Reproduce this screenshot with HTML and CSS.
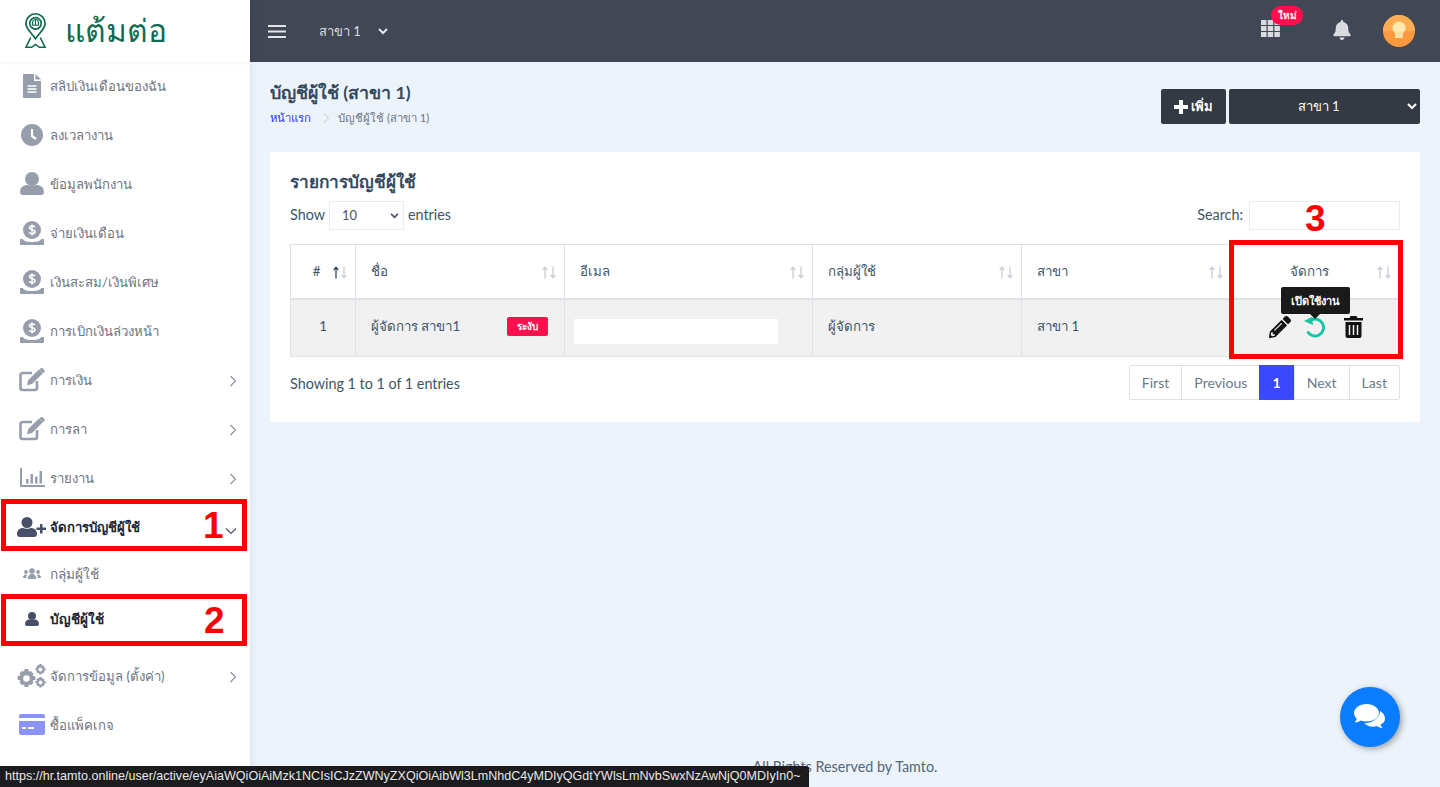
FILE: index.html
```html
<!DOCTYPE html>
<html lang="th">
<head>
  <meta charset="UTF-8">
  <title>บัญชีผู้ใช้</title>
  <link rel="stylesheet" href="styles.css">
</head>
<body>
  <div class="app">
    <aside class="sidebar">
      <div class="brand">
        <svg class="brand-icon" viewBox="0 0 24 38" fill="none" stroke="#0f6b4f" stroke-width="1.8">
          <path d="M12 27C7 20 2 17 2 11a10 10 0 0 1 20 0c0 6-5 9-10 16z"/>
          <circle cx="12" cy="11" r="6"/>
          <path d="M9 13v-3a3 3 0 0 1 6 0v3zM12 7v6" stroke-width="1.2"/>
          <path d="M7 26l-5 10h6l4-3 4 3h6l-5-10" stroke-width="1.6"/>
        </svg>
        <span class="brand-name">แต้มต่อ</span>
      </div>
      <nav class="nav">
        <a class="nav-item"><span class="nav-icon"><svg width="18" height="24" viewBox="0 0 18 24"><path fill="#989dab" d="M0 1a1 1 0 0 1 1-1h10v7h7v16a1 1 0 0 1-1 1H1a1 1 0 0 1-1-1z"/><path fill="#989dab" d="M12.500 0L18 5.500h-5.500z"/><path stroke="#fff" stroke-width="1.300" d="M4.500 12h9M4.500 15h9M4.500 18h9"/></svg></span>สลิปเงินเดือนของฉัน</a>
        <a class="nav-item"><span class="nav-icon"><svg width="22" height="22" viewBox="0 0 22 22"><circle cx="11" cy="11" r="11" fill="#989dab"/><path d="M11 5v7l4 3" fill="none" stroke="#fff" stroke-width="2.200"/></svg></span>ลงเวลางาน</a>
        <a class="nav-item"><span class="nav-icon"><svg width="24" height="23" viewBox="0 0 24 23"><circle cx="12" cy="7" r="7" fill="#989dab"/><path fill="#989dab" d="M0 20c0-5 4-7 7-7 2 1 8 1 10 0 3 0 7 2 7 7 0 2-1 3-3 3H3c-2 0-3-1-3-3z"/></svg></span>ข้อมูลพนักงาน</a>
        <a class="nav-item"><span class="nav-icon"><svg class="coin-icon" width="24" height="24" viewBox="0 0 24 24"><use href="#coin"/></svg></span>จ่ายเงินเดือน</a>
        <a class="nav-item"><span class="nav-icon"><svg class="coin-icon" width="24" height="24" viewBox="0 0 24 24"><use href="#coin"/></svg></span>เงินสะสม/เงินพิเศษ</a>
        <a class="nav-item"><span class="nav-icon"><svg class="coin-icon" width="24" height="24" viewBox="0 0 24 24"><use href="#coin"/></svg></span>การเบิกเงินล่วงหน้า</a>
        <a class="nav-item"><span class="nav-icon"><svg width="26" height="24" viewBox="0 0 26 24"><use href="#edit"/></svg></span>การเงิน<svg class="chevron" viewBox="0 0 8 12"><path d="M1.500 1l5 5-5 5"/></svg></a>
        <a class="nav-item"><span class="nav-icon"><svg width="26" height="24" viewBox="0 0 26 24"><use href="#edit"/></svg></span>การลา<svg class="chevron" viewBox="0 0 8 12"><path d="M1.500 1l5 5-5 5"/></svg></a>
        <a class="nav-item"><span class="nav-icon"><svg width="25" height="19" viewBox="0 0 25 19"><path fill="#989dab" d="M0 0h2v17h23v2H0z"/><path fill="#989dab" d="M6 11h2.500v4.500H6zM10.500 6h2.500v9.500h-2.500zM15 8.500h2.500v7H15zM19.500 3H22v12.500h-2.500z"/></svg></span>รายงาน<svg class="chevron" viewBox="0 0 8 12"><path d="M1.500 1l5 5-5 5"/></svg></a>
        <a class="nav-item nav-active"><span class="nav-icon"><svg width="30" height="20" viewBox="0 0 30 20"><circle cx="10" cy="5.500" r="5.500" fill="#484f68"/><path fill="#484f68" d="M0 17c0-4 3-6 6-6 2 1 6 1 8 0 3 0 6 2 6 6 0 2-1 3-3 3H3c-2 0-3-1-3-3z"/><path fill="#484f68" d="M23 7h2.500v3.500H29V13h-3.500v3.500H23V13h-3.500v-2.500H23z"/></svg></span>จัดการบัญชีผู้ใช้<svg class="chevron chevron-down" viewBox="0 0 12 8"><path d="M1 1.500l5 5 5-5"/></svg></a>
        <div class="subnav">
          <a class="sub-item"><span class="sub-icon"><svg width="18" height="11" viewBox="0 0 18 11"><g fill="#989dab"><circle cx="9" cy="3" r="2.800"/><circle cx="3" cy="4" r="1.900"/><circle cx="15" cy="4" r="1.900"/><path d="M4.500 11c0-3 2-5 4.500-5s4.500 2 4.500 5zM0 10c0-2 1-3.500 3-3.500l1 .5-1 3zM18 10c0-2-1-3.500-3-3.500l-1 .5 1 3z"/></g></svg></span>กลุ่มผู้ใช้</a>
          <a class="sub-item sub-active"><span class="sub-icon"><svg width="14" height="14" viewBox="0 0 14 14"><circle cx="7" cy="4" r="4" fill="#484f68"/><path fill="#484f68" d="M0 12c0-3 2-4.500 4-4.500 1.500.6 4.500.6 6 0 2 0 4 1.500 4 4.500 0 1.300-.7 2-2 2H2c-1.300 0-2-.7-2-2z"/></svg></span>บัญชีผู้ใช้</a>
        </div>
        <a class="nav-item"><span class="nav-icon"><svg width="30" height="24" viewBox="0 0 30 24"><use href="#gear" x="0" y="5" width="19" height="19"/><use href="#gear" x="18" y="0" width="11" height="11"/><use href="#gear" x="18" y="13" width="11" height="11"/></svg></span>จัดการข้อมูล (ตั้งค่า)<svg class="chevron" viewBox="0 0 8 12"><path d="M1.500 1l5 5-5 5"/></svg></a>
        <a class="nav-item"><span class="nav-icon"><svg width="26" height="21" viewBox="0 0 26 21"><path fill="#8a94f5" d="M2 0h22a2 2 0 0 1 2 2v2H0V2a2 2 0 0 1 2-2zM0 7h26v12a2 2 0 0 1-2 2H2a2 2 0 0 1-2-2z"/><path fill="#fff" d="M3 13h4v2H3zM9 13h6v2H9z"/></svg></span>ซื้อแพ็คเกจ</a>
      </nav>
    </aside>

    <div class="main">
      <header class="topbar">
        <svg class="burger" viewBox="0 0 18 13"><path d="M0 1h18M0 6.500h18M0 12h18"/></svg>
        <span class="branch-label">สาขา 1</span>
        <svg class="branch-caret" viewBox="0 0 10 7"><path d="M1 1l4 4 4-4"/></svg>
        <div class="topbar-right">
          <span class="apps">
            <svg width="19" height="17" viewBox="0 0 19 17" fill="#d9dbe0"><path d="M0 0h5.500v5H0zM6.700 0h5.500v5H6.700zM13.400 0h5.500v5h-5.500zM0 6h5.500v5H0zM6.700 6h5.500v5H6.700zM13.400 6h5.500v5h-5.500zM0 12h5.500v5H0zM6.700 12h5.500v5H6.700zM13.400 12h5.500v5h-5.500z"/></svg>
            <span class="new-badge">ใหม่</span>
          </span>
          <svg class="bell" width="18" height="20" viewBox="0 0 448 512"><path fill="#d9dbe0" d="M224 512c35.320 0 63.970-28.650 63.970-64H160.030c0 35.350 28.650 64 63.970 64zm215.390-149.710c-19.320-20.760-55.470-51.990-55.470-154.290 0-77.700-54.480-139.900-127.940-155.160V32c0-17.670-14.320-32-31.980-32s-31.980 14.330-31.980 32v20.840C118.560 68.100 64.080 130.300 64.080 208c0 102.300-36.150 133.530-55.470 154.290-6 6.450-8.660 14.160-8.610 21.710.11 16.400 12.980 32 32.100 32h383.800c19.120 0 32-15.600 32.100-32 .05-7.550-2.610-15.270-8.610-21.710z"/></svg>
          <svg class="avatar" width="32" height="32" viewBox="0 0 32 32"><circle cx="16" cy="16" r="16" fill="#fd9a3f"/><path fill="#ffad55" d="M0 16a16 16 0 0 1 32 0z"/><circle cx="16" cy="13" r="6.500" fill="#fbe9b0"/><path fill="#fbe0a0" d="M12 17h8v6h-8z"/></svg>
        </div>
      </header>

      <div class="page">
        <div class="page-head">
          <div>
            <h1 class="page-title">บัญชีผู้ใช้ (สาขา 1)</h1>
            <div class="crumbs">
              <a class="crumb-link">หน้าแรก</a>
              <svg class="crumb-sep" viewBox="0 0 8 12"><path d="M1.500 1l5 5-5 5"/></svg>
              <span>บัญชีผู้ใช้ (สาขา 1)</span>
            </div>
          </div>
          <div class="page-actions">
            <button class="btn-add"><svg width="14" height="14" viewBox="0 0 14 14" fill="#fff"><path d="M5 0h4v5h5v4H9v5H5V9H0V5h5z"/></svg>เพิ่ม</button>
            <div class="branch-select">สาขา 1<svg viewBox="0 0 10 7"><path d="M1 1l4 4 4-4"/></svg></div>
          </div>
        </div>

        <section class="card">
          <h2 class="card-title">รายการบัญชีผู้ใช้</h2>
          <div class="table-tools">
            <div class="length">Show <span class="length-select">10<svg viewBox="0 0 10 7"><path d="M1 1l4 4 4-4"/></svg></span> entries</div>
            <div class="search">Search: <span class="search-input"></span></div>
          </div>

          <table class="users">
            <colgroup>
              <col class="col-id"><col class="col-name"><col class="col-email"><col class="col-group"><col class="col-branch"><col>
            </colgroup>
            <thead>
              <tr>
                <th class="center">#<svg class="sort sort-asc" viewBox="0 0 14 13"><use href="#sort-up"/><use href="#sort-down"/></svg></th>
                <th>ชื่อ<svg class="sort" viewBox="0 0 14 13"><use href="#sort-up"/><use href="#sort-down"/></svg></th>
                <th>อีเมล<svg class="sort" viewBox="0 0 14 13"><use href="#sort-up"/><use href="#sort-down"/></svg></th>
                <th>กลุ่มผู้ใช้<svg class="sort" viewBox="0 0 14 13"><use href="#sort-up"/><use href="#sort-down"/></svg></th>
                <th>สาขา<svg class="sort" viewBox="0 0 14 13"><use href="#sort-up"/><use href="#sort-down"/></svg></th>
                <th class="center">จัดการ<svg class="sort" viewBox="0 0 14 13"><use href="#sort-up"/><use href="#sort-down"/></svg></th>
              </tr>
            </thead>
            <tbody>
              <tr>
                <td class="center">1</td>
                <td><div class="name-cell">ผู้จัดการ สาขา1<span class="status">ระงับ</span></div></td>
                <td class="email-cell"><div class="email-mask"></div></td>
                <td>ผู้จัดการ</td>
                <td>สาขา 1</td>
                <td class="actions">
                  <div class="action-icons">
                    <svg width="22" height="22" viewBox="0 0 512 512"><path fill="#111" d="M497.900 142.100l-46.100 46.100c-4.700 4.700-12.300 4.700-17 0l-111-111c-4.700-4.700-4.700-12.300 0-17l46.100-46.100c18.700-18.700 49.100-18.700 67.900 0l60.100 60.100c18.800 18.700 18.800 49.100 0 67.900zM284.200 99.800L21.600 362.400.4 483.900c-2.900 16.400 11.400 30.600 27.800 27.800l121.500-21.300 262.600-262.600c4.700-4.700 4.700-12.300 0-17l-111-111c-4.800-4.700-12.400-4.700-17.100 0zM124.100 339.900c-5.500-5.500-5.500-14.300 0-19.800l154-154c5.500-5.500 14.300-5.500 19.800 0s5.500 14.300 0 19.800l-154 154c-5.500 5.500-14.300 5.500-19.800 0zM88 424h48v36.300l-64.500 11.300-31.100-31.100L51.700 376H88v48z"/></svg>
                    <svg width="22" height="22" viewBox="0 0 22 22" fill="none"><path stroke="#14c4a2" stroke-width="2.800" d="M7 4a8.500 8.500 0 1 1-3.500 11.500"/><path fill="#14c4a2" d="M0 5l8-4 1 8z"/></svg>
                    <svg class="trash" width="19" height="22" viewBox="0 0 19 22"><path fill="#111" d="M6.500 0h6l1 2H19v2.500H0V2h5.500zM1.500 6h16v14a2 2 0 0 1-2 2h-12a2 2 0 0 1-2-2z"/><path stroke="#f0f0f1" stroke-width="1.500" d="M5.500 9v10M9.500 9v10M13.500 9v10"/></svg>
                  </div>
                  <div class="tooltip">เปิดใช้งาน</div>
                </td>
              </tr>
            </tbody>
          </table>

          <div class="table-foot">
            <div class="table-info">Showing 1 to 1 of 1 entries</div>
            <div class="pager">
              <a>First</a><a>Previous</a><a class="current">1</a><a>Next</a><a>Last</a>
            </div>
          </div>
        </section>
      </div>

      <footer class="footer">All Rights Reserved by Tamto.</footer>
    </div>
  </div>

  <!-- chat button -->
  <a class="chat-btn">
    <svg width="32" height="26" viewBox="0 0 32 26" fill="#fff">
      <path d="M12.500 0C5.600 0 0 4 0 9c0 2.200 1 4.200 2.800 5.800C2.200 16.500 1 18 .6 18.500c2.500 0 4.700-1 6-2 1.800.7 3.800 1 5.900 1 6.900 0 12.500-3.800 12.500-8.500S19.400 0 12.500 0z"/>
      <path d="M26 7c.4 4.800-5.300 11-13.500 12-.8 0-1.500.1-2.200 0 2 2.300 5.200 3.700 8.700 3.700 1.300 0 2.600-.2 3.700-.6 1.300 1 3.500 1.900 6 1.900-.5-.6-1.600-2-2.200-3.600C29.800 19 31 17 31 14.700 31 11.500 29 8.700 26 7z"/>
    </svg>
  </a>

  <!-- annotations drawn over the capture -->
  <div class="mark mark-1"></div>
  <div class="mark mark-2"></div>
  <div class="mark mark-3"></div>
  <span class="mark-num num-1">1</span>
  <span class="mark-num num-2">2</span>
  <span class="mark-num num-3">3</span>

  <div class="status-url">https://hr.tamto.online/user/active/eyAiaWQiOiAiMzk1NCIsICJzZWNyZXQiOiAibWl3LmNhdC4yMDIyQGdtYWlsLmNvbSwxNzAwNjQ0MDIyIn0~</div>

  <svg class="defs" width="0" height="0">
    <defs>
      <path id="sort-up" class="arrow-up" d="M3 12.500V1.500M.7 4L3 1.200 5.300 4"/>
      <path id="sort-down" class="arrow-down" d="M11 .5v11M8.700 9l2.300 2.800L13.300 9"/>
      <g id="coin">
        <circle cx="12" cy="9" r="9" fill="#989dab"/>
        <path d="M15 6c-1-1.300-5.500-1.700-5.500.8 0 2.600 5.500 1.400 5.500 4 0 2.500-4.600 2.200-6 .7M12 3.500v11" fill="none" stroke="#fff" stroke-width="1.500"/>
        <path fill="#989dab" d="M0 18h2.500c2 2.200 4 3 9.500 3s7.500-.8 9.500-3H24v5a1 1 0 0 1-1 1H1a1 1 0 0 1-1-1z"/>
      </g>
      <g id="edit">
        <path fill="none" stroke="#989dab" stroke-width="2.600" d="M18 13v7a2 2 0 0 1-2 2H3.500a2 2 0 0 1-2-2V7a2 2 0 0 1 2-2H13"/>
        <path fill="#989dab" d="M20 1.500l3.800 3.800L13 16l-5 1.200L9.200 12zM21.500.4c.8-.7 1.800-.4 2.500.2l1.200 1.200c.6.8.7 1.800 0 2.500l-1 1-3.700-3.800z"/>
      </g>
      <symbol id="gear" viewBox="0 0 20 20">
        <path fill="#989dab" fill-rule="evenodd" d="M8 0h4l.6 3 2-.9 2.800 2.800-1.100 2.100 3 .6v4l-3 .6 1.100 2.100-2.800 2.800-2-1.100-.6 3H8l-.6-3-2 1.100-2.800-2.800L3.700 12l-3-.6v-4l3-.6-1.100-2.100 2.800-2.800 2 .9zM10 6.500a3.500 3.500 0 1 0 0 7 3.500 3.500 0 0 0 0-7z"/>
      </symbol>
    </defs>
  </svg>
</body>
</html>
```
FILE: styles.css
```css
* {
  box-sizing: border-box;
}
html, body {
  margin: 0;
  height: 787px;
  overflow: hidden;
}
body {
  font-family: 'Lato', 'Noto Sans', 'DejaVu Sans', sans-serif;
  font-size: 14.35px;
  color: #3e5569;
  background: #edf3fa;
}
.app {
  display: flex;
  height: 787px;
}
.defs {
  position: absolute;
}

/* sidebar */
.sidebar {
  width: 250px;
  flex: none;
  background: #fff;
  box-shadow: 1px 0 8px rgba(0, 0, 0, 0.08);
  z-index: 2;
}
.brand {
  height: 62px;
  display: flex;
  align-items: center;
  padding-left: 24px;
  box-shadow: 0 1px 4px rgba(0, 0, 0, 0.05);
}
.brand-icon {
  width: 23px;
  height: 38px;
}
.brand-name {
  margin-left: 18px;
  font-size: 31.7px;
  color: #0f6b4f;
}
.nav-item {
  height: 49px;
  display: flex;
  align-items: center;
  font-size: 13.2px;
  color: #6f7480;
}
.nav-icon {
  width: 50px;
  flex: none;
  display: flex;
  justify-content: center;
  margin-top: -2px;
  padding-left: 16px;
  padding-right: 2px;
}
.chevron {
  width: 8px;
  height: 12px;
  margin-left: auto;
  margin-right: 13px;
  fill: none;
  stroke: #8a8f9b;
  stroke-width: 1.1;
}
.chevron-down {
  width: 12px;
  height: 8px;
  margin-right: 13px;
  margin-top: 6px;
  stroke: #484f68;
}
.nav-active {
  color: #1e2433;
  font-weight: 700;
}
.subnav {
  margin-top: -1px;
  padding-bottom: 11px;
}
.sub-item {
  height: 45px;
  display: flex;
  align-items: center;
  font-size: 13.6px;
  color: #6f7480;
}
.sub-icon {
  width: 50px;
  flex: none;
  display: flex;
  justify-content: center;
  padding-left: 14px;
}
.sub-active {
  color: #1e2433;
  font-weight: 700;
}

/* top bar */
.main {
  flex: 1;
  min-width: 0;
  display: flex;
  flex-direction: column;
}
.topbar {
  height: 62px;
  flex: none;
  display: flex;
  align-items: center;
  background: #414755;
  padding-left: 18px;
  color: #d9dbe0;
}
.burger {
  width: 18px;
  height: 13px;
  fill: none;
  stroke: #e4e5e9;
  stroke-width: 2;
}
.branch-label {
  margin-left: 33px;
  font-size: 13px;
}
.branch-caret {
  width: 10px;
  height: 7px;
  margin-left: 17px;
  fill: none;
  stroke: #e4e5e9;
  stroke-width: 2;
}
.topbar-right {
  margin-left: auto;
  padding-right: 25px;
  display: flex;
  align-items: center;
  gap: 52px;
}
.apps {
  position: relative;
  display: flex;
  margin-top: -6px;
  margin-right: 2px;
}
.new-badge {
  position: absolute;
  left: 10px;
  top: -14px;
  width: 32px;
  height: 19px;
  border-radius: 10px;
  background: #ff0f4e;
  color: #fff;
  font-size: 10px;
  font-weight: 700;
  line-height: 19px;
  text-align: center;
}
.bell {
  margin-left: -1px;
  margin-top: -2px;
}
.avatar {
  margin-left: -20px;
}

/* page */
.page {
  flex: 1;
  padding: 20px 20px 0;
}
.page-head {
  display: flex;
  justify-content: space-between;
  align-items: flex-start;
  height: 70px;
}
.page-title {
  margin: 0;
  font-size: 17.8px;
  font-weight: 700;
  line-height: 20px;
  color: #34495e;
}
.crumbs {
  display: flex;
  align-items: center;
  margin-top: 7px;
  font-size: 11.3px;
  line-height: 17px;
  color: #6b7685;
}
.crumb-link {
  color: #2b36f5;
}
.crumb-sep {
  width: 8px;
  height: 12px;
  margin: 0 8px 0 11px;
  fill: none;
  stroke: #c5c9cf;
  stroke-width: 1;
}
.page-actions {
  display: flex;
  gap: 3px;
  margin-top: 7px;
}
.btn-add {
  width: 65px;
  height: 35px;
  display: flex;
  align-items: center;
  justify-content: center;
  gap: 3px;
  border: 0;
  border-radius: 2px;
  background: #343a43;
  color: #fff;
  font: 700 13px 'Lato', 'Noto Sans', sans-serif;
}
.branch-select {
  position: relative;
  width: 191px;
  height: 35px;
  border-radius: 2px;
  background: #343a43;
  color: #fff;
  font-size: 13px;
  line-height: 35px;
  text-align: center;
  padding-right: 12px;
}
.branch-select svg {
  position: absolute;
  right: 3px;
  top: 14px;
  width: 10px;
  height: 7px;
  fill: none;
  stroke: #fff;
  stroke-width: 2;
}

/* card */
.card {
  height: 270px;
  background: #fff;
  padding: 20px;
}
.card-title {
  margin: 0;
  font-size: 17.2px;
  font-weight: 700;
  line-height: 20px;
  color: #34495e;
}
.table-tools {
  display: flex;
  justify-content: space-between;
  align-items: center;
  height: 31px;
  margin-top: 7px;
}
.length {
  display: flex;
  align-items: center;
  gap: 4px;
}
.length-select {
  position: relative;
  width: 75px;
  height: 29px;
  margin-top: 2px;
  border: 1px solid #e9ecef;
  padding-left: 12px;
  font-size: 13px;
  line-height: 27px;
  color: #4f5467;
}
.length-select svg {
  position: absolute;
  right: 4px;
  top: 11px;
  width: 9px;
  height: 6px;
  fill: none;
  stroke: #4f5467;
  stroke-width: 2;
}
.search {
  display: flex;
  align-items: center;
  gap: 6px;
}
.search-input {
  width: 151px;
  height: 29px;
  margin-top: 2px;
  border: 1px solid #e9ecef;
}

/* table */
.users {
  width: 1110px;
  margin-top: 14px;
  table-layout: fixed;
  border-collapse: collapse;
  font-size: 13.3px;
}
.col-id {
  width: 65px;
}
.col-name {
  width: 209px;
}
.col-email {
  width: 248px;
}
.col-group {
  width: 209px;
}
.col-branch {
  width: 210px;
}
.users th,
.users td {
  border: 1px solid #dee2e6;
  padding: 0 15px;
  text-align: left;
  font-weight: 400;
}
.users th {
  position: relative;
  height: 54px;
  border-bottom-width: 2px;
}
.users th.center {
  padding-right: 28px;
}
.users td {
  height: 58px;
  padding-bottom: 3px;
  background: #f1f1f2;
}
.users .center {
  text-align: center;
}
.users .email-cell {
  padding-left: 9px;
  padding-bottom: 0;
}
.sort {
  position: absolute;
  right: 8px;
  top: 21px;
  width: 14px;
  height: 13px;
  fill: none;
  stroke: #c8ced5;
  stroke-width: 1.300;
}
.sort-asc use:first-child {
  stroke: #34495e;
}
.name-cell {
  display: flex;
  justify-content: space-between;
  align-items: center;
  padding-right: 1px;
}
.status {
  width: 41px;
  height: 19px;
  border-radius: 2px;
  background: #ff0f4e;
  color: #fff;
  font-size: 10px;
  font-weight: 700;
  line-height: 19px;
  text-align: center;
}
.email-mask {
  width: 204px;
  height: 25px;
  margin-top: 8px;
  background: #fff;
}
.actions {
  position: relative;
}
.action-icons {
  display: flex;
  justify-content: center;
  align-items: center;
  gap: 13px;
  margin-top: 1px;
}
.trash {
  margin-left: 5px;
}
.tooltip {
  position: absolute;
  left: 49px;
  top: -13px;
  width: 69px;
  height: 27px;
  border-radius: 2px;
  background: #1a1a1a;
  color: #fff;
  font-size: 11px;
  font-weight: 700;
  line-height: 27px;
  text-align: center;
}
.tooltip::after {
  content: "";
  position: absolute;
  left: 29px;
  bottom: -5px;
  border: 5px solid transparent;
  border-top-color: #1a1a1a;
  border-bottom: 0;
}
.table-foot {
  display: flex;
  justify-content: space-between;
  margin-top: 8px;
  line-height: 35px;
}
.table-info {
  padding-top: 1px;
}
.pager {
  display: flex;
  height: 35px;
  border: 1px solid #dee2e6;
  border-radius: 2px;
  font-size: 14.1px;
  color: #6d7a88;
}
.pager a {
  padding: 0 12px;
  line-height: 33px;
  border-left: 1px solid #dee2e6;
}
.pager a:first-child {
  border-left: 0;
}
.pager .current {
  padding: 0 13px;
  margin-top: -1px;
  margin-bottom: -1px;
  height: 35px;
  line-height: 35px;
  border: 0;
  background: #3b48ff;
  color: #fff;
  font-weight: 700;
}

.footer {
  height: 30px;
  flex: none;
  text-align: center;
  line-height: 19px;
  color: #54667a;
}

/* floating */
.chat-btn {
  position: absolute;
  left: 1340px;
  top: 687px;
  width: 60px;
  height: 60px;
  display: flex;
  align-items: center;
  justify-content: center;
  border-radius: 50%;
  background: #0a7cff;
  box-shadow: 2px 2px 6px rgba(0, 0, 0, 0.35);
}
.mark {
  position: absolute;
  border: 5px solid #f00;
  z-index: 3;
}
.mark-1 {
  left: 1px;
  top: 499px;
  width: 246px;
  height: 52px;
}
.mark-2 {
  left: 1px;
  top: 594px;
  width: 246px;
  height: 52px;
}
.mark-3 {
  left: 1229px;
  top: 240px;
  width: 174px;
  height: 119px;
}
.mark-num {
  position: absolute;
  z-index: 3;
  color: #f00;
  font: 700 37px/40px 'Liberation Sans', sans-serif;
}
.num-1 {
  left: 203px;
  top: 506px;
}
.num-2 {
  left: 204px;
  top: 601px;
}
.num-3 {
  left: 1305px;
  top: 199px;
}
.status-url {
  position: absolute;
  left: 0;
  bottom: 0;
  z-index: 4;
  width: 809px;
  height: 21px;
  padding-left: 5px;
  background: #1c1c1e;
  color: #e8e8e8;
  font: 12.55px/21px 'Liberation Sans', sans-serif;
  white-space: nowrap;
  overflow: hidden;
  border-top-right-radius: 3px;
}
```
